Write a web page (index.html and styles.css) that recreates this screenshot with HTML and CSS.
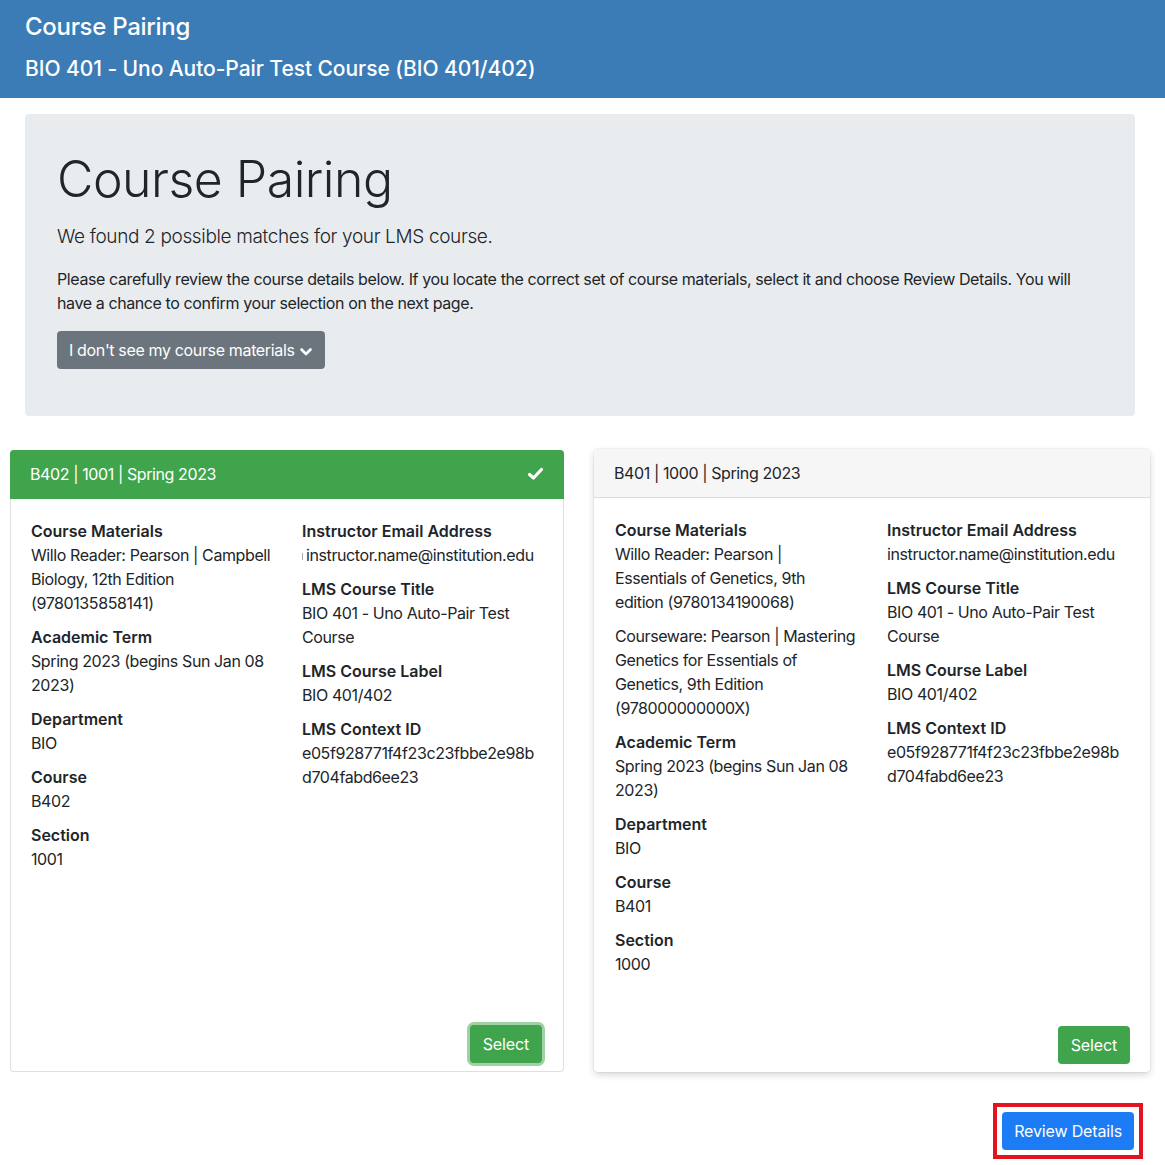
FILE: index.html
```html
<!DOCTYPE html>
<html lang="en">
<head>
<meta charset="UTF-8">
<meta name="viewport" content="width=device-width, initial-scale=1.0">
<title>Course Pairing</title>
<link rel="stylesheet" href="styles.css">
</head>
<body>

<div class="topbar">
  <div class="topbar-title">Course Pairing</div>
  <div class="topbar-sub">BIO 401 - Uno Auto-Pair Test Course (BIO 401/402)</div>
</div>

<div class="jumbotron">
  <h1>Course Pairing</h1>
  <p class="lead">We found 2 possible matches for your LMS course.</p>
  <p class="intro">Please carefully review the course details below. If you locate the correct set of course materials, select it and choose Review Details. You will have a chance to confirm your selection on the next page.</p>
  <button class="btn btn-gray">I don't see my course materials
    <svg class="chevron" width="14" height="10" viewBox="0 0 14 10"><path d="M2.5 2.5 L7 7 L11.5 2.5" fill="none" stroke="#fff" stroke-width="2.6" stroke-linecap="round" stroke-linejoin="round"/></svg>
  </button>
</div>

<div class="cards">
  <div class="card card-selected">
    <div class="card-header">
      <span>B402 | 1001 | Spring 2023</span>
      <svg width="17" height="14" viewBox="0 0 17 14"><path d="M2.5 7.5 L6.5 11 L14.5 2.5" fill="none" stroke="#fff" stroke-width="3.2" stroke-linecap="round" stroke-linejoin="round"/></svg>
    </div>
    <div class="card-body">
      <div class="col">
        <div class="item"><b>Course Materials</b><p>Willo Reader: Pearson | Campbell Biology, 12th Edition (9780135858141)</p></div>
        <div class="item"><b>Academic Term</b><p>Spring 2023 (begins Sun Jan 08 2023)</p></div>
        <div class="item"><b>Department</b><p>BIO</p></div>
        <div class="item"><b>Course</b><p>B402</p></div>
        <div class="item"><b>Section</b><p>1001</p></div>
      </div>
      <div class="col">
        <div class="item"><b>Instructor Email Address</b><p class="nowrap"><span class="clip"></span>instructor.name@institution.edu</p></div>
        <div class="item"><b>LMS Course Title</b><p>BIO 401 - Uno Auto-Pair Test Course</p></div>
        <div class="item"><b>LMS Course Label</b><p>BIO 401/402</p></div>
        <div class="item"><b>LMS Context ID</b><p class="id">e05f928771f4f23c23fbbe2e98bd704fabd6ee23</p></div>
      </div>
    </div>
    <div class="card-footer">
      <button class="btn btn-green btn-focus">Select</button>
    </div>
  </div>

  <div class="card card-raised">
    <div class="card-header">
      <span>B401 | 1000 | Spring 2023</span>
    </div>
    <div class="card-body">
      <div class="col">
        <div class="item"><b>Course Materials</b><p>Willo Reader: Pearson | Essentials of Genetics, 9th edition (9780134190068)</p><p>Courseware: Pearson | Mastering Genetics for Essentials of Genetics, 9th Edition (978000000000X)</p></div>
        <div class="item"><b>Academic Term</b><p>Spring 2023 (begins Sun Jan 08 2023)</p></div>
        <div class="item"><b>Department</b><p>BIO</p></div>
        <div class="item"><b>Course</b><p>B401</p></div>
        <div class="item"><b>Section</b><p>1000</p></div>
      </div>
      <div class="col">
        <div class="item"><b>Instructor Email Address</b><p>instructor.name@institution.edu</p></div>
        <div class="item"><b>LMS Course Title</b><p>BIO 401 - Uno Auto-Pair Test Course</p></div>
        <div class="item"><b>LMS Course Label</b><p>BIO 401/402</p></div>
        <div class="item"><b>LMS Context ID</b><p class="id">e05f928771f4f23c23fbbe2e98bd704fabd6ee23</p></div>
      </div>
    </div>
    <div class="card-footer">
      <button class="btn btn-green">Select</button>
    </div>
  </div>
</div>

<div class="actions">
  <div class="highlight">
    <button class="btn btn-blue">Review Details</button>
  </div>
</div>

</body>
</html>
```

FILE: styles.css
```css
  body {
    margin: 0;
    font-family: Inter, "Noto Sans", sans-serif;
    font-size: 16px;
    line-height: 24px;
    letter-spacing: -0.4px;
    color: #212529;
    background: #fff;
  }
  .topbar {
    height: 98px;
    box-sizing: border-box;
    padding: 11px 25px 0;
    background-color: #3b7cb7;
    color: #fff;
    font-weight: 500;
  }
  .topbar-title {
    font-size: 24px;
    line-height: 32px;
    letter-spacing: -0.3px;
  }
  .topbar-sub {
    font-size: 21px;
    line-height: 32px;
    letter-spacing: -0.06px;
    margin-top: 10px;
  }
  .jumbotron {
    margin: 16px 30px 0 25px;
    padding: 32px 32px 47px;
    background-color: #e9ecef;
    border-radius: 4px;
  }
  .jumbotron h1 {
    margin: 0 0 8px;
    font-size: 50px;
    font-weight: 300;
    line-height: 67px;
    letter-spacing: -0.5px;
  }
  .lead {
    margin: 0 0 16px;
    padding-top: 1px;
    font-size: 19px;
    font-weight: 300;
    line-height: 29px;
    letter-spacing: -0.35px;
  }
  .intro {
    margin: 0 0 16px;
  }
  .btn {
    font-family: inherit;
    font-size: 16px;
    line-height: 24px;
    letter-spacing: -0.15px;
    padding: 7px 12px;
    border: none;
    border-radius: 4px;
    color: #fff;
    cursor: pointer;
  }
  .btn-gray {
    background-color: #6c757d;
    display: inline-flex;
    align-items: center;
    letter-spacing: -0.35px;
  }
  .chevron {
    margin-left: 4px;
    margin-top: 3px;
  }
  .cards {
    display: flex;
    align-items: stretch;
    gap: 30px;
    margin-top: 34px;
    padding-left: 10px;
  }
  .card {
    display: flex;
    flex-direction: column;
    box-sizing: border-box;
    border: 1px solid rgba(0,0,0,0.125);
    border-radius: 4px;
    background: #fff;
  }
  .card-selected {
    width: 554px;
  }
  .card-raised {
    width: 556px;
    margin-top: -1px;
    border: none;
    box-shadow: 0 0 0 1px rgba(0,0,0,0.03), 0 3px 7px rgba(0,0,0,0.16);
  }
  .card-header {
    display: flex;
    justify-content: space-between;
    align-items: center;
    padding: 12px 20px;
    background-color: #f6f6f6;
    border-bottom: 1px solid #dcdcdc;
    border-radius: 4px 4px 0 0;
  }
  .card-selected .card-header {
    background-color: #3fa44c;
    color: #fff;
    border-bottom-color: #3fa44c;
    margin: -1px -1px 0;
    padding-left: 20px;
  }
  .card-body {
    display: grid;
    grid-template-columns: 1fr 1fr;
    column-gap: 30px;
    padding: 20px 20px 0;
  }
  .card-raised .card-body {
    column-gap: 31px;
    padding: 20px 22px 0 21px;
  }
  .item {
    margin-bottom: 10px;
  }
  .item b {
    display: block;
    font-weight: 600;
    letter-spacing: 0;
  }
  .item p {
    margin: 0;
  }
  .item p + p {
    margin-top: 10px;
  }
  .id {
    word-break: break-all;
  }
  .nowrap {
    white-space: nowrap;
  }
  .clip {
    display: inline-block;
    width: 1px;
    height: 7px;
    margin-right: 3px;
    background: #aaa;
    vertical-align: middle;
  }
  .card-footer {
    margin-top: auto;
    padding: 40px 20px 8px;
    text-align: right;
  }
  .btn-green {
    background-color: #3fa44c;
    padding: 7px 13px;
  }
  .btn-focus {
    box-shadow: 0 0 0 3px rgba(63,164,76,0.5);
    margin-right: 1px;
  }
  .actions {
    display: flex;
    justify-content: flex-end;
    margin: 31px 22px 0 0;
  }
  .highlight {
    border: 4px solid #e3141f;
    padding: 5px;
    line-height: 0;
  }
  .btn-blue {
    background-color: #1b7cf5;
  }
```
